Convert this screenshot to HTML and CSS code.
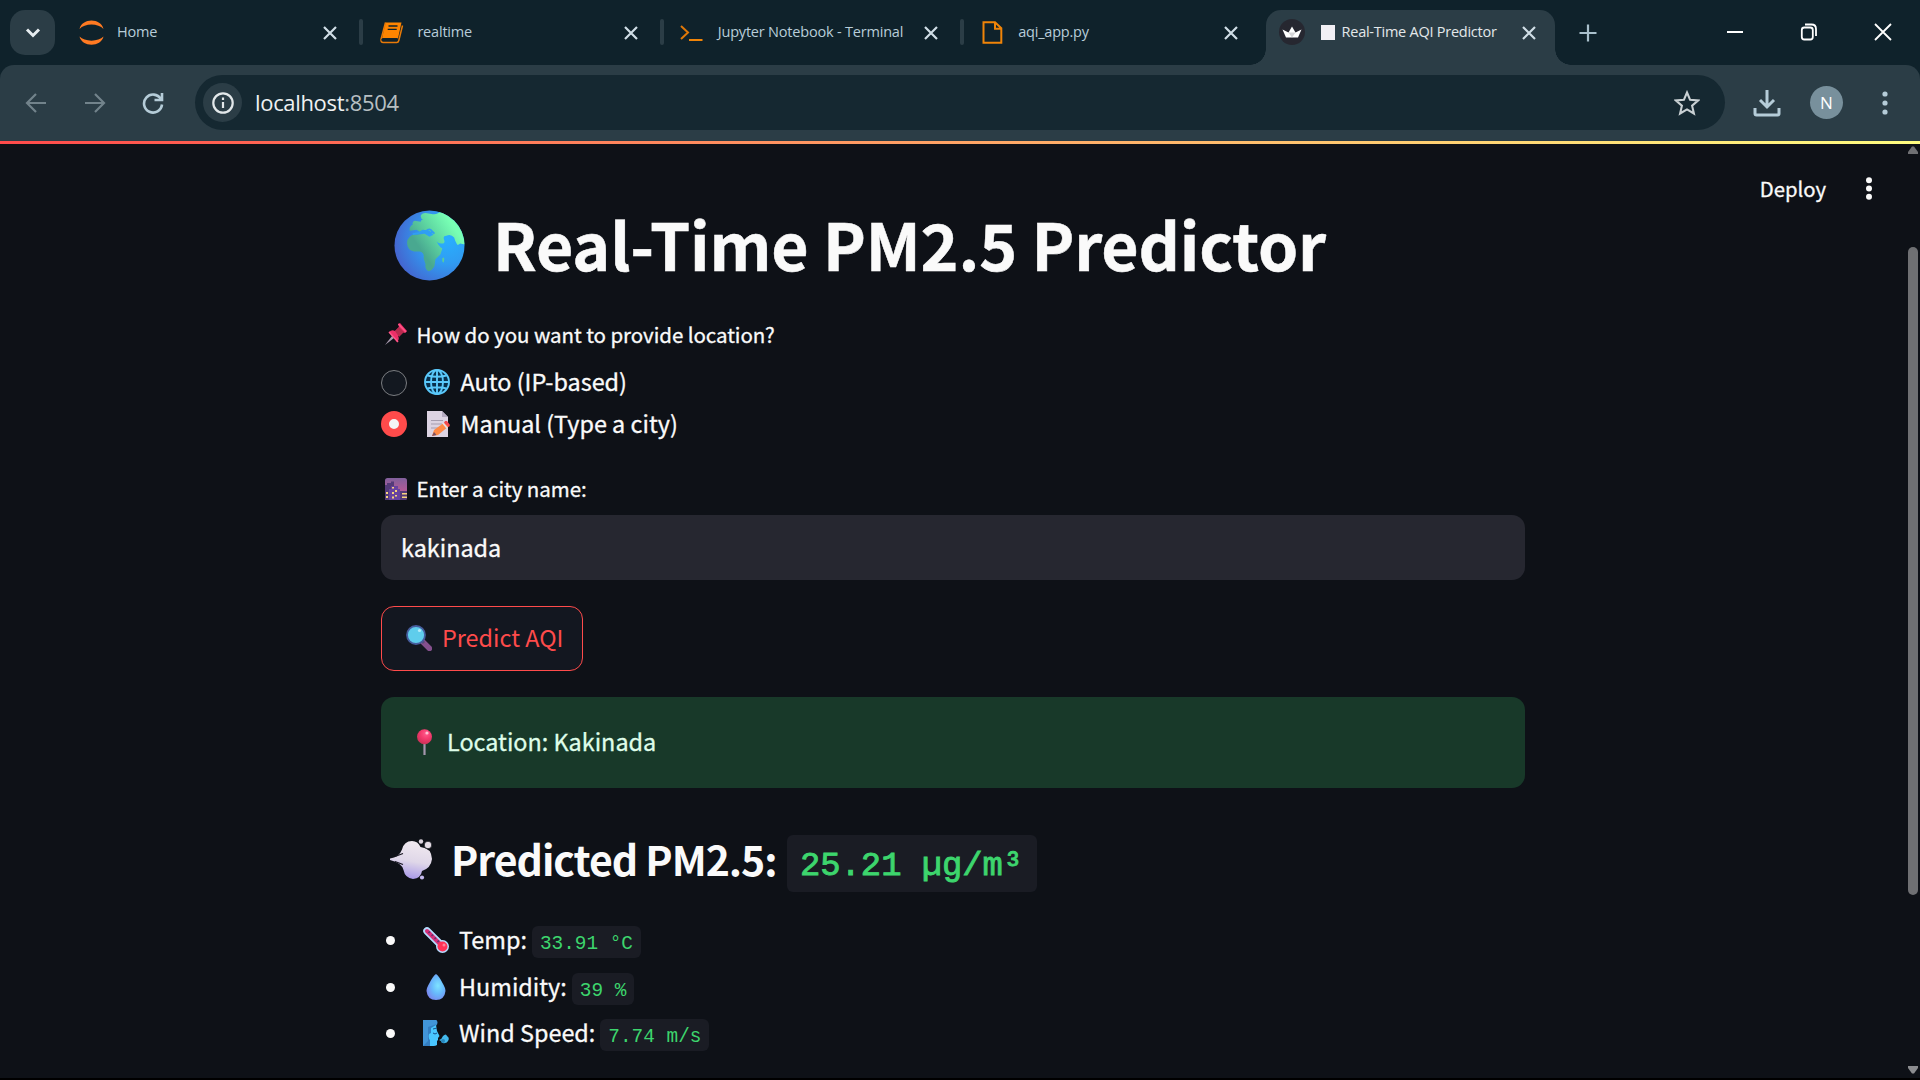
FILE: index.html
```html
<!DOCTYPE html>
<html lang="en">
<head>
<meta charset="utf-8">
<title>Real-Time AQI Predictor</title>
<link rel="stylesheet" href="styles.css">
</head>
<body>
<div class="tabstrip">
  <div class="tab-search"><svg width="16" height="10" viewBox="0 0 16 10"><path d="M2 1.500l6 6 6-6" fill="none" stroke="#e6edf0" stroke-width="3"/></svg></div>
  <div class="tab">
    <svg class="fav" viewBox="0 0 25 25"><path d="M.5 9C3-2.500 22-2.500 24.500 9 19.500 3 5.500 3 .5 9zM.5 16.500c2.500 11 21.500 11 24 0-5 5.500-19 5.500-24 0z" fill="#ff7a22"/></svg>
    <span class="tab-title">Home</span>
    <svg class="close" viewBox="0 0 14 14"><path d="M1 1l12 12M13 1L1 13"/></svg>
    <i class="sep"></i>
  </div>
  <div class="tab">
    <svg class="fav" viewBox="0 0 25 25"><path d="M6.500 2.500h16l-3.500 16h-16z" fill="#ff8500"/><path d="M6.500 2.500l-4.500 17q-.3 3 2.200 3h13.600q1.500 0 2-2l3.700-15" fill="none" stroke="#e87a08" stroke-width="1.500"/><path d="M3 20.500q-.3-2 1.500-2h14" fill="none" stroke="#10222b" stroke-width="1.200"/><path d="M9.500 6h9M8.700 9.300h9" stroke="#10222b" stroke-width="1.300"/></svg>
    <span class="tab-title">realtime</span>
    <svg class="close" viewBox="0 0 14 14"><path d="M1 1l12 12M13 1L1 13"/></svg>
    <i class="sep"></i>
  </div>
  <div class="tab">
    <svg class="fav" viewBox="0 0 25 25"><path d="M2 6l7 6.500L2 19" fill="none" stroke="#e07808" stroke-width="2"/><path d="M10 20h13.500" stroke="#f08408" stroke-width="2"/></svg>
    <span class="tab-title">Jupyter Notebook - Terminal</span>
    <svg class="close" viewBox="0 0 14 14"><path d="M1 1l12 12M13 1L1 13"/></svg>
    <i class="sep"></i>
  </div>
  <div class="tab">
    <svg class="fav" viewBox="0 0 25 25"><path d="M3.500 2.200h11.500l6.300 6v14.600H3.500zM15 2.200v6.500h6.300" fill="none" stroke="#f08408" stroke-width="2"/></svg>
    <span class="tab-title">aqi_app.py</span>
    <svg class="close" viewBox="0 0 14 14"><path d="M1 1l12 12M13 1L1 13"/></svg>
  </div>
  <div class="tab active">
    <svg class="fav" viewBox="0 0 26 26"><circle cx="13" cy="13" r="13" fill="#262730"/><path d="M3.500 10.500l6 3L13 7.500l3.500 6 6-3-3.500 8H7z" fill="#fff"/><path d="M9.500 13.500l3.500 5 3.500-5" fill="#d5d5d8"/></svg>
    <i class="white-box"></i>
    <span class="tab-title">Real-Time AQI Predictor</span>
    <svg class="close" viewBox="0 0 14 14"><path d="M1 1l12 12M13 1L1 13"/></svg>
  </div>
  <svg class="new-tab" viewBox="0 0 18 18"><path d="M9 .5v17M.5 9h17" stroke="#a9c0cc" stroke-width="2.200"/></svg>
  <div class="window-controls">
    <svg width="18" height="18" viewBox="0 0 18 18"><path d="M1 9h16" stroke="#fff" stroke-width="2"/></svg>
    <svg width="18" height="18" viewBox="0 0 18 18"><rect x="1.800" y="4.500" width="11" height="12" rx="2.500"/><path d="M5 1.500h6.500q4.500 0 4.500 4.500v7"/></svg>
    <svg width="18" height="18" viewBox="0 0 18 18"><path d="M1 1l16 16M17 1L1 17"/></svg>
  </div>
</div>

<div class="toolbar">
  <div class="nav">
    <svg width="22" height="20" viewBox="0 0 22 20" class="dim"><path d="M21 10H2M11 1L2 10l9 9"/></svg>
    <svg width="22" height="20" viewBox="0 0 22 20" class="dim"><path d="M1 10h19M11 1l9 9-9 9"/></svg>
    <svg width="22" height="22" viewBox="0 0 22 22" class="reload"><path d="M18.800 7A9 9 0 1 0 20 12.500"/><path d="M20 1v7h-7.500"/></svg>
  </div>
  <div class="omnibox">
    <div class="info"><svg width="22" height="22" viewBox="0 0 22 22"><circle cx="11" cy="11" r="9.700" fill="none" stroke="#e3e8ea" stroke-width="2.200"/><path d="M11 10v6M11 5.500v2.400" stroke="#e3e8ea" stroke-width="2.200"/></svg></div>
    <div class="url">localhost<span>:8504</span></div>
    <svg width="26" height="26" viewBox="0 0 26 26"><path d="M13 2.500l3.100 7.300 8 .7-6 5.200 1.800 7.800-6.900-4.100-6.900 4.100 1.800-7.800-6-5.200 8-.7z" fill="none" stroke="#c9d0d3" stroke-width="2.100"/></svg>
  </div>
  <svg class="download" width="28" height="28" viewBox="0 0 28 28"><path d="M14 1v16M7 11l7 7 7-7M2 19v5.500q0 1.500 1.500 1.500h21q1.500 0 1.500-1.500V19" fill="none" stroke="#b5ccd8" stroke-width="3"/></svg>
  <div class="avatar">N</div>
  <svg class="menu" width="6" height="24" viewBox="0 0 6 24" fill="#b5ccd8"><circle cx="3" cy="3" r="2.600"/><circle cx="3" cy="12" r="2.600"/><circle cx="3" cy="21" r="2.600"/></svg>
</div>
<div class="rainbow"></div>

<div class="page">
  <main class="content">
    <h1 class="title">
      <svg class="globe" viewBox="0 0 72 72">
        <defs>
          <radialGradient id="sea" cx=".75" cy=".4" r=".8"><stop offset="0" stop-color="#28b0ff"/><stop offset=".45" stop-color="#309cf2"/><stop offset="1" stop-color="#4660cc"/></radialGradient>
          <linearGradient id="land" x1=".75" y1=".2" x2=".2" y2=".6"><stop offset="0" stop-color="#78ffb4"/><stop offset=".5" stop-color="#5fd8a2"/><stop offset="1" stop-color="#49a890"/></linearGradient>
          <clipPath id="ball"><circle cx="36" cy="36" r="35.500"/></clipPath>
        </defs>
        <circle cx="36" cy="36" r="35.500" fill="url(#sea)"/>
        <g clip-path="url(#ball)">
          <path d="M27 6q1-3 5-3l6 1q4 1 7-1l4-3h23v35l-5-1q-2 2-3 1-2-3-3-7-3-4-8-2-4 0-2 5 1 3-3 3-4 0-5-3 2 6 6 8l-2 6-5 5-1 7q-3 5-6 5-4-2-3-7l-2-6q1-6-4-7-8 1-11-3-4-7 1-12 3-3 7-2l8-1 5 3 4-2-4-4-7-1-3 2-3-2-7 1q-1-4 3-6-1-3 2-4l6 1q0-2 3-3l3-2V7l-2 3-3-1z" fill="url(#land)"/>
          <path d="M49 49q2-2 2 1l-.5 3q-2 1-1.500-4z" fill="#58cc9c"/>
          <path d="M19 24.500l6-1 5-2.500 4 2.500 6-1M32 22q3-3 5-2l4 4" fill="none" stroke="#309ff3" stroke-width="1.800"/>
        </g>
      </svg>
      <span>Real-Time PM2.5 Predictor</span>
    </h1>

    <div class="label">
      <svg class="ico-s" viewBox="0 0 22 22"><path d="M0 22l7-9 2 2z" fill="#a99bb0"/><path d="M4 9q3-3 6-1l4-4-1-3 2-1 7 8-2 2-3-1-4 4q2 3-1 6z" fill="#ec2f68"/><path d="M10 8l4-4 5 5-5 5z" fill="#b72b4e"/><path d="M4 9l9 10M13.500 1l7.500 8" stroke="#ff5587" stroke-width="1.500"/></svg>
      <span>How do you want to provide location?</span>
    </div>
    <div class="radio">
      <i class="dot"></i>
      <svg class="ico" viewBox="0 0 26 26"><circle cx="13" cy="13" r="12" fill="#082f4c"/><g fill="none" stroke="#5ac8fa" stroke-width="1.900"><circle cx="13" cy="13" r="12"/><ellipse cx="13" cy="13" rx="6" ry="12"/><path d="M13 1v24M1 13h24M3.500 6.500q9.500 2.500 19 0M3.500 19.500q9.500-2.500 19 0"/></g></svg>
      <span>Auto (IP-based)</span>
    </div>
    <div class="radio">
      <i class="dot on"></i>
      <svg class="ico" viewBox="0 0 26 26"><path d="M3 0h15l6 6v20H3z" fill="#dcd3e2"/><path d="M18 0v6h6z" fill="#b5abc1"/><path d="M7 9.500h12M7 13h11M7 17h7" stroke="#a69daf" stroke-width="1"/><path d="M8 25l2-6L21 11l4 4-11 9z" fill="#ff8a45"/><path d="M21 10l2 0 3 4-1 2-5-4z" fill="#f4474e"/><path d="M8 25l2-4 2.500 3z" fill="#7b5063"/><path d="M19 12l4 5" stroke="#e8dce8" stroke-width="1.800"/></svg>
      <span>Manual (Type a city)</span>
    </div>

    <div class="label city">
      <svg class="ico-s" viewBox="0 0 22 22"><defs><linearGradient id="dusk" x2="0" y2="1"><stop stop-color="#80609c"/><stop offset=".6" stop-color="#b35a96"/></linearGradient></defs><rect width="22" height="22" rx="2.500" fill="url(#dusk)"/><path d="M0 7h2V5h4V3.500h3V9h-3v13H0zM15 13h7v7q0 2-2 2h-5z" fill="#533a78"/><path d="M6 8h7v3h2v11H4V11h2z" fill="#6842a0"/><path d="M1 14h2v2H1zM1 18h2v2H1zM7 9h2v1.500H7zM10 12h2v2h-2zM7 14h2v2H7zM10 17h2v1.500h-2zM7 18.500h2v2H7zM17 15h5v1.500h-5zM17 18.500h5V20h-5z" fill="#f7d27c"/></svg>
      <span>Enter a city name:</span>
    </div>
    <div class="input">kakinada</div>

    <div class="button">
      <svg class="ico" viewBox="0 0 26 26"><path d="M17 17l6.500 6.500" stroke="#85508d" stroke-width="5.500" stroke-linecap="round"/><path d="M15 15l3 3" stroke="#5b4b7d" stroke-width="3"/><circle cx="10" cy="10" r="9" fill="#5fcdec" stroke="#465d9d" stroke-width="1.800"/><circle cx="13.500" cy="5.500" r="1.600" fill="#b6ecfa"/></svg>
      <span>Predict AQI</span>
    </div>

    <div class="alert">
      <svg class="ico" viewBox="0 0 26 26"><defs><radialGradient id="pin" cx=".6" cy=".3" r=".7"><stop stop-color="#ff5c8c"/><stop offset=".5" stop-color="#f43a6e"/><stop offset="1" stop-color="#cd3158"/></radialGradient></defs><path d="M13.500 13v13" stroke="#a596ad" stroke-width="2.200"/><circle cx="13.500" cy="7.700" r="7.500" fill="url(#pin)"/><circle cx="16" cy="4" r="1.600" fill="#ffc0d4"/></svg>
      <span>Location: Kakinada</span>
    </div>

    <h3 class="result">
      <svg class="puff" viewBox="0 0 42 41">
        <defs><linearGradient id="gas" x1=".7" y1="0" x2=".5" y2="1"><stop stop-color="#f1eaf0"/><stop offset=".55" stop-color="#dfd7e8"/><stop offset="1" stop-color="#a898e8"/></linearGradient></defs>
        <path d="M0 19.500q9-1 12-9Q14 2 22 2q6 0 8.500 6 11 1 11.500 12-1 9-10 12-1 7-9 8-8-1-9.500-9Q12 24 0 21z" fill="url(#gas)"/>
        <path d="M5 17.500l8-3M5 22.500l8 3" stroke="#181821" stroke-width="1.300"/>
        <circle cx="31" cy="2.500" r="2.200" fill="#ddd5df"/><circle cx="38" cy="6" r="3.800" fill="#e5dde6" stroke="#0e1117" stroke-width=".8"/><circle cx="32" cy="38.500" r="2.100" fill="#c3b8ed"/>
      </svg>
      <span>Predicted PM2.5:</span>
      <code>25.21 µg/m³</code>
    </h3>

    <ul class="metrics">
      <li>
        <svg class="ico" viewBox="0 0 26 26"><path d="M4 4l15 15" stroke="#b5dcff" stroke-width="7.500" stroke-linecap="round"/><circle cx="19.500" cy="19.500" r="6.500" fill="#b5dcff"/><path d="M4 4l15 15" stroke="#d52e78" stroke-width="4" stroke-linecap="round"/><circle cx="19.500" cy="19.500" r="5" fill="#ff3157"/><path d="M7 4.500L5.500 6M10 7.500L8.500 9M13 10.500L11.500 12M16 13.500L14.500 15" stroke="#65336d" stroke-width="1.600"/><circle cx="21" cy="18" r="1.500" fill="#ff8098"/></svg>
        <span>Temp:</span><code>33.91 °C</code>
      </li>
      <li>
        <svg class="ico" viewBox="0 0 26 26"><defs><radialGradient id="drop" cx=".6" cy=".45" r=".65"><stop stop-color="#7ee3ff"/><stop offset=".5" stop-color="#68b9fc"/><stop offset="1" stop-color="#7b85ee"/></radialGradient></defs><path d="M13 0q3 2 6.500 9 3 5 3 8-1 9-9.500 9t-9.500-9q0-3 3-8Q10 2 13 0z" fill="url(#drop)"/></svg>
        <span>Humidity:</span><code>39 %</code>
      </li>
      <li>
        <svg class="ico" viewBox="0 0 26 26"><path d="M0 0h13q2 1 1 5l-5 3v18H0z" fill="#337ec2"/><path d="M0 0h13q2 1 1 4L5 7v14l-5 5z" fill="#4195d9"/><path d="M8 8l5-3 1 6 2.500 5-1.500 2v2l-1 1v4q-3 1.500-7 1V20q-2-2-1-6l2-1z" fill="#49c6ff"/><path d="M10 9l4-1M10 13q2 2 4 0" stroke="#174f89" stroke-width="1" fill="none"/><path d="M16 20q3-1 4-4 3-3 4 0 3 2 1 5-1 2-3 2-3 1-4-2z" fill="#43b9ed"/><circle cx="20" cy="21" r="2" fill="#2888bd"/></svg>
        <span>Wind Speed:</span><code>7.74 m/s</code>
      </li>
    </ul>
  </main>
  <div class="actions">
    <span>Deploy</span>
    <svg width="8" height="24" viewBox="0 0 8 24" fill="#fafafa"><circle cx="4" cy="3.300" r="3"/><circle cx="4" cy="11.500" r="3"/><circle cx="4" cy="19.700" r="3"/></svg>
  </div>
  <div class="scrollbar">
    <svg width="10" height="8" viewBox="0 0 10 8"><path d="M4 .5h2L10 6v2H0V6z" fill="#6f7073"/></svg>
    <i class="thumb"></i>
    <svg width="10" height="8" viewBox="0 0 10 8"><path d="M4 7.500h2L10 2V0H0v2z" fill="#8b8c8f"/></svg>
  </div>
</div>
</body>
</html>
```
FILE: styles.css
```css
* { box-sizing: border-box; }
html, body { margin: 0; }
body {
  width: 1920px;
  height: 1080px;
  overflow: hidden;
  display: flex;
  flex-direction: column;
  background: #000;
  color: #fafafa;
  font-family: "Noto Sans CJK SC", "Noto Sans", sans-serif;
}
svg { display: block; flex: none; }

/* Tab strip: runs under the rounded corners of the toolbar */
.tabstrip {
  height: 79px;
  margin-bottom: -14px;
  flex: none;
  display: flex;
  align-items: flex-start;
  padding-left: 10px;
  background: #0f222b;
  font-family: "Open Sans", "Noto Sans", sans-serif;
}
.tab-search {
  width: 45px;
  height: 45px;
  margin: 10px 9px 0 0;
  border-radius: 15px;
  background: #2b3d46;
  display: flex;
  align-items: center;
  justify-content: center;
}
.tab {
  width: 300.4px;
  height: 65px;
  display: flex;
  align-items: center;
  padding: 0 0 1px 14.500px;
  flex: none;
}
.fav { width: 25px; height: 25px; margin-right: 13.500px; }
.tab-title {
  flex: 1;
  font-size: 14.500px;
  letter-spacing: -0.2px;
  line-height: 20px;
  white-space: nowrap;
  color: #b8cdd9;
}
.close { width: 14px; height: 14px; margin: 1px 22px 0 0; }
.close path { fill: none; stroke: #d0dee6; stroke-width: 2.200; }
.sep { width: 4px; height: 26px; border-radius: 2px; background: #2b3d46; margin-right: 1px; }
.tab:nth-child(5) .close { margin-right: 28px; }
.tab.active {
  position: relative;
  width: 289.500px;
  height: 55px;
  margin-top: 10px;
  padding: 0 0 11px 13px;
  background: #2b3d46;
  border-radius: 15px 15px 0 0;
}
.tab.active::before, .tab.active::after {
  content: "";
  position: absolute;
  bottom: 0;
  width: 16px;
  height: 16px;
}
.tab.active::before { left: -16px; background: radial-gradient(circle at 0 0, transparent 15.500px, #2b3d46 16px); }
.tab.active::after { right: -16px; background: radial-gradient(circle at 100% 0, transparent 15.500px, #2b3d46 16px); }
.active .fav { width: 26px; height: 26px; margin-right: 16px; }
.active .close { margin-right: 19px; }
.white-box { width: 14px; height: 15px; background: #f1eff4; margin-right: 7px; }
.active .tab-title { color: #e3e8ea; letter-spacing: -0.25px; }
.new-tab { width: 18px; height: 18px; margin: 24px 0 0 24px; }
.window-controls { display: flex; gap: 56px; margin: 23px 28px 0 auto; }
.window-controls svg { fill: none; stroke: #fff; stroke-width: 1.800; }

/* Toolbar */
.toolbar {
  height: 76px;
  flex: none;
  display: flex;
  align-items: center;
  padding-bottom: 1px;
  position: relative;
  background: #2b3d46;
  border-radius: 14px 14px 0 0;
}
.nav { width: 195px; display: flex; align-items: center; padding-left: 25px; gap: 36.500px; }
.nav svg { fill: none; stroke-width: 2.200; stroke: #b5ccd8; }
.nav .dim { stroke: #72838b; }
.nav .reload { stroke-width: 2.600; }
.omnibox {
  width: 1530px;
  height: 55px;
  border-radius: 28px;
  background: #152831;
  display: flex;
  align-items: center;
  padding: 0 25px 0 8px;
}
.info {
  width: 39px;
  height: 39px;
  border-radius: 50%;
  background: #2b3d46;
  display: flex;
  align-items: center;
  justify-content: center;
}
.url {
  flex: 1;
  margin: 0 0 2px 13px;
  font: 22px/30px "Open Sans", "Noto Sans", sans-serif;
  letter-spacing: -0.33px;
  color: #eef1f2;
}
.url span { color: #b7bfc2; }
.download { margin-left: 28px; }
.avatar {
  width: 33px;
  height: 33px;
  margin-left: 29px;
  border-radius: 50%;
  background: #78909c;
  text-align: center;
  font: 17px/33px "Open Sans", sans-serif;
  color: #fff;
}
.menu { margin-left: 39px; }
.rainbow { height: 3px; flex: none; background: linear-gradient(90deg, #ff4b4b, #fffd80); }

/* App */
.page {
  height: 934px;
  flex: none;
  display: flex;
  position: relative;
  overflow: hidden;
  background: #0e1117;
}
.content { width: 1144px; margin-left: 381px; padding-top: 59px; font-size: 23.400px; }
.content span { white-space: nowrap; }
.title {
  height: 80px;
  margin: 0;
  display: flex;
  align-items: center;
  padding-left: 13px;
  font-size: 64.350px;
  letter-spacing: -0.15px;
  line-height: 80px;
  font-weight: 700;
  -webkit-text-stroke: 0.5px currentColor;
}
.globe { width: 71px; height: 71px; margin: 5px 28px 0 0; }
.label {
  height: 34px;
  margin-top: 34px;
  padding-left: 4px;
  display: flex;
  align-items: center;
  font-size: 20.500px;
  letter-spacing: -0.06px;
  line-height: 34px;
}
.label, .radio, .input, .alert, .metrics span, .actions { -webkit-text-stroke: 0.3px currentColor; }
.ico-s { width: 22px; height: 22px; margin-right: 9.500px; }
.ico { width: 26px; height: 26px; }
.radio { height: 42px; display: flex; align-items: center; line-height: 42px; }
.label + .radio { margin-top: 9px; }
.dot {
  width: 26px;
  height: 26px;
  margin: 3px 17px 0 0;
  border-radius: 50%;
  border: 1.500px solid #7b7d81;
  background: #131820;
}
.dot.on { margin-top: 2px; border: 8.500px solid #ff4b4b; background: #f4f4f5; }
.radio .ico { margin: 1px 10.500px 0 0; }
.label.city { margin-top: 27px; }
.city .ico-s { margin-top: 1px; }
.input {
  height: 65px;
  margin-top: 10px;
  padding-left: 20px;
  border-radius: 13px;
  background: #262730;
  line-height: 64px;
}
.button {
  width: 202px;
  height: 65px;
  margin-top: 26px;
  padding: 0 0 1px 24px;
  display: flex;
  align-items: center;
  gap: 10px;
  border: 1px solid #ff4b4b;
  border-radius: 13px;
  background: #131720;
  color: #ff4b4b;
  line-height: 60px;
}
.button span { margin-bottom: 3px; }
.alert {
  height: 91px;
  margin-top: 26px;
  padding: 0 0 3px 30px;
  display: flex;
  align-items: center;
  gap: 10px;
  border-radius: 13px;
  background: #183929;
  color: #dffde9;
}
.alert .ico { margin-top: 1px; }
.result {
  height: 57px;
  margin: 47px 0 0;
  padding-left: 9px;
  display: flex;
  align-items: center;
  font-size: 41px;
  line-height: 46px;
  font-weight: 700;
}
.result span { width: 328px; margin-bottom: 11px; letter-spacing: -1.020px; }
.puff { width: 42px; height: 41px; margin: 0 19px 8px 0; }
code {
  font-family: "Liberation Mono", "DejaVu Sans Mono", monospace;
  color: #3dd56d;
  background: #1a1c24;
  white-space: pre;
}
.result code {
  width: 250px;
  height: 57px;
  margin-left: 8px;
  padding-left: 13px;
  border-radius: 6px;
  font-size: 33.800px;
  font-weight: 400;
  line-height: 63px;
  -webkit-text-stroke: 0.9px currentColor;
}
.metrics { list-style: none; margin: 27px 0 0; padding: 0; }
.metrics li { height: 46.500px; display: flex; align-items: center; line-height: 40px; }
.metrics li::before {
  content: "";
  width: 9px;
  height: 9px;
  margin: 0 28px 3px 5px;
  border-radius: 50%;
  background: #fafafa;
}
.metrics .ico { margin: 0 10px 4px 0; }
.metrics span { margin-bottom: 6px; }
.metrics code {
  height: 32px;
  margin-left: 5px;
  padding: 0 8px;
  border-radius: 6px;
  font-size: 19.400px;
  line-height: 36px;
}
.actions {
  position: absolute;
  top: 24px;
  right: 47px;
  display: flex;
  align-items: center;
  gap: 39px;
  font-size: 20.300px;
  line-height: 40px;
}
.actions span { margin-bottom: 2px; }
.scrollbar {
  margin-left: auto;
  padding: 2px 2px 4px 0;
  display: flex;
  flex-direction: column;
  justify-content: space-between;
}
.thumb { width: 10px; height: 648px; margin-bottom: 78px; border-radius: 5px; background: #6f7073; }
```
